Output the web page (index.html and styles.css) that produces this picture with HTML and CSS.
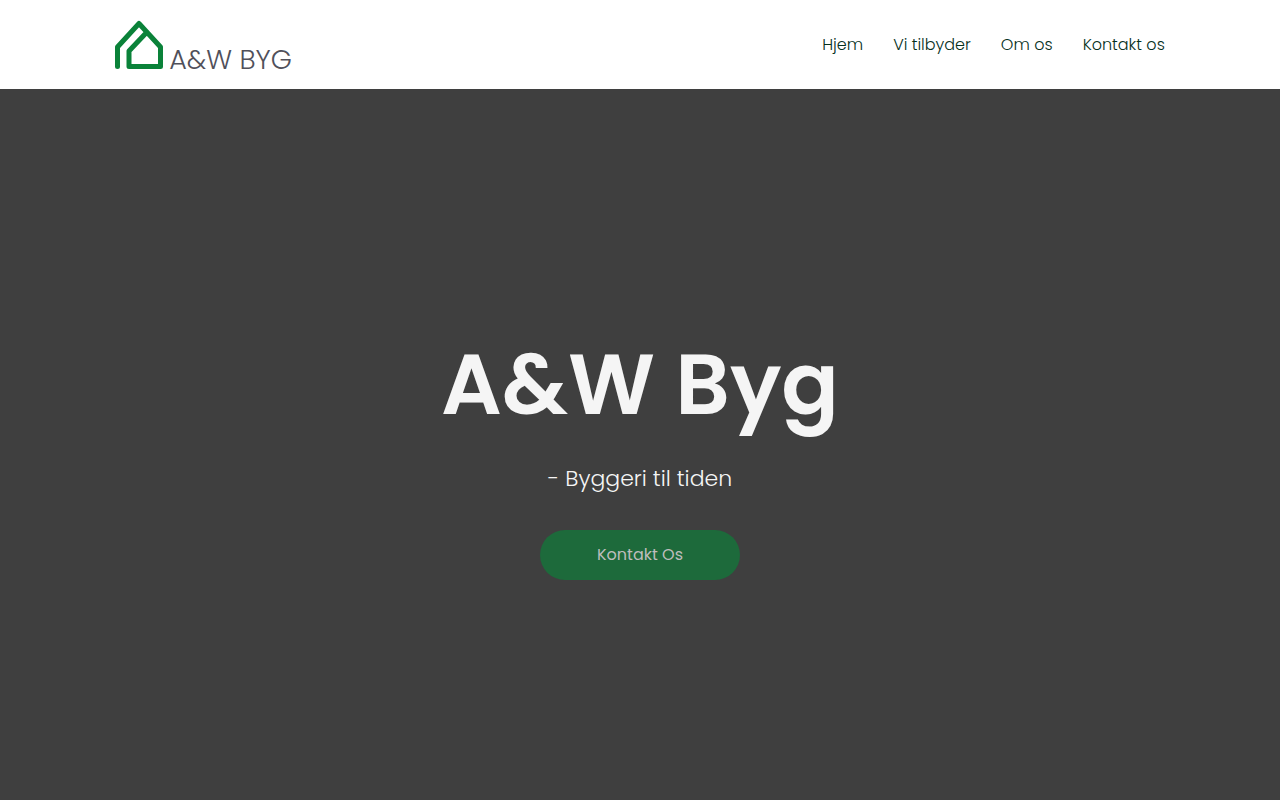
FILE: index.html
```html
<!DOCTYPE html>
<html lang="da">
<head>
<meta charset="utf-8">
<meta name="viewport" content="width=device-width, initial-scale=1">
<title>A&amp;W Byg</title>
<link rel="stylesheet" href="styles.css">
</head>
<body>
<header class="header">
  <a class="logo" href="#">
    <svg class="logo-mark" viewBox="0 0 48 49" aria-hidden="true">
      <path d="M2.500 46.500V27L24 3.500L45.500 27V46.500H14V31L32 12"/>
    </svg>
    <span class="logo-text">A&amp;W BYG</span>
  </a>
  <nav class="nav">
    <a href="#">Hjem</a>
    <a href="#tilbyder">Vi tilbyder</a>
    <a href="#om">Om os</a>
    <a href="#kontakt">Kontakt os</a>
  </nav>
</header>
<main class="hero">
  <h1 class="title">A&amp;W Byg</h1>
  <p class="tagline">- Byggeri til tiden</p>
  <button class="cta" type="button">Kontakt Os</button>
</main>
</body>
</html>
```

FILE: styles.css
```css
* {
  box-sizing: border-box;
}

body {
  display: flex;
  flex-direction: column;
  min-height: 100vh;
  margin: 0;
  font-family: Poppins, Inter, "Open Sans", sans-serif;
  background: #3f3f3f;
}

.header {
  display: flex;
  align-items: center;
  justify-content: space-between;
  padding: 20px 9%;
  background: #fff;
}

.logo {
  display: flex;
  align-items: flex-end;
  gap: 6px;
  color: #50505a;
  text-decoration: none;
}

.logo-mark {
  width: 48px;
  height: 49px;
  fill: none;
  stroke: #0a8239;
  stroke-width: 5;
  stroke-linecap: round;
  stroke-linejoin: round;
}

.logo-text {
  font-size: 27px;
  font-weight: 300;
  line-height: 18px;
}

.nav {
  display: flex;
  gap: 30px;
}

.nav a {
  color: #06301c;
  font-size: 16px;
  font-weight: 300;
  line-height: 24px;
  text-decoration: none;
}

.hero {
  display: flex;
  flex: 1;
  flex-direction: column;
  align-items: center;
  justify-content: center;
  padding: 42px 16px 32px;
  color: #f5f5f5;
  text-align: center;
}

.title {
  margin: 0 0 11px;
  font-size: 85px;
  font-weight: 600;
  line-height: 130px;
}

.tagline {
  margin: 0 0 33px;
  font-size: 22px;
  font-weight: 300;
  line-height: 36px;
}

.cta {
  width: 200px;
  height: 50px;
  border: 0;
  border-radius: 25px;
  background: #1d6a3b;
  color: #bdbdbd;
  font: inherit;
  font-size: 16px;
}
```
